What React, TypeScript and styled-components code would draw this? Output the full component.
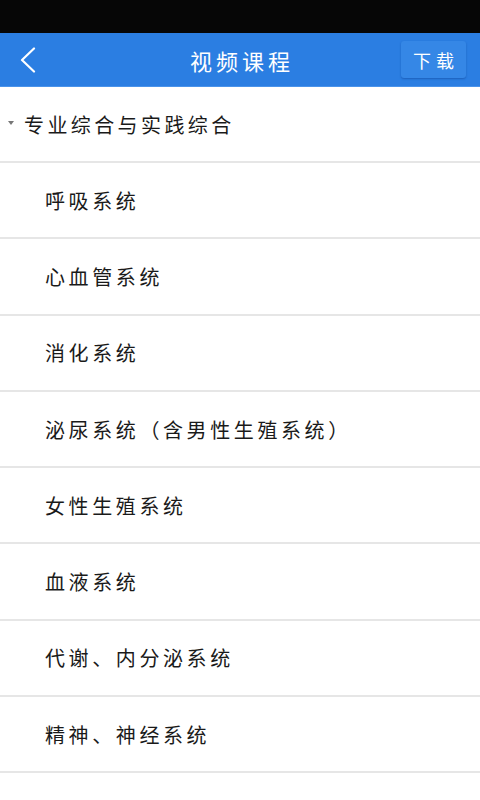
import React from "react";
import styled, { createGlobalStyle } from "styled-components";

const Global = createGlobalStyle`
  html, body { margin: 0; padding: 0; background: #ffffff; }
  body { font-family: "Noto Sans CJK SC", "Noto Sans", sans-serif; }
  * { box-sizing: border-box; }
`;

const Screen = styled.div`
  width: 480px;
  height: 800px;
  overflow: hidden;
  display: flex;
  flex-direction: column;
  background: #ffffff;
`;

const StatusBar = styled.div`
  height: 33px;
  background: #060606;
  flex-shrink: 0;
`;

const NavBar = styled.div`
  height: 54px;
  flex-shrink: 0;
  background: #2b7ee2;
  display: grid;
  grid-template-columns: 80px 1fr 80px;
  align-items: center;
  border-bottom: 1px solid #4a93ea;
`;

const BackButton = styled.div`
  display: flex;
  align-items: center;
  padding-left: 19px;
  height: 100%;
`;

const Title = styled.div`
  text-align: center;
  color: #ffffff;
  font-size: 22px;
  letter-spacing: 4px;
  padding-left: 4px;
  line-height: 1;
`;

const DownloadButton = styled.div`
  justify-self: end;
  margin-right: 14px;
  width: 65px;
  height: 37px;
  border-radius: 3px;
  background: #3587e6;
  box-shadow: 0 1px 2px rgba(10, 60, 140, 0.45);
  color: #ffffff;
  font-size: 18px;
  letter-spacing: 5px;
  padding-left: 5px;
  display: flex;
  align-items: center;
  justify-content: center;
`;

const List = styled.div`
  display: flex;
  flex-direction: column;
`;

const GroupHeader = styled.div`
  height: 76px;
  display: flex;
  align-items: center;
  padding-left: 8px;
  border-bottom: 2px solid #e6e6e6;
  color: #1a1a1a;
  font-size: 20px;
  letter-spacing: 3.4px;
`;

const Caret = styled.span`
  width: 0;
  height: 0;
  border-left: 3.5px solid transparent;
  border-right: 3.5px solid transparent;
  border-top: 4px solid #777777;
  margin-right: 10px;
  margin-top: -2px;
`;

const Row = styled.div`
  height: 76.3px;
  display: flex;
  align-items: center;
  padding-left: 45px;
  border-bottom: 2px solid #e6e6e6;
  color: #1a1a1a;
  font-size: 20px;
  letter-spacing: 3.6px;
`;

const items = [
  "呼吸系统",
  "心血管系统",
  "消化系统",
  "泌尿系统（含男性生殖系统）",
  "女性生殖系统",
  "血液系统",
  "代谢、内分泌系统",
  "精神、神经系统",
];

export default function App() {
  return (
    <>
      <Global />
      <Screen>
        <StatusBar />
        <NavBar>
          <BackButton>
            <svg width="17" height="26" viewBox="0 0 17 26" fill="none">
              <path d="M15 1.5 L3 13 L15 24.5" stroke="#ffffff" strokeWidth="2.2" strokeLinecap="round" strokeLinejoin="round" />
            </svg>
          </BackButton>
          <Title>视频课程</Title>
          <DownloadButton>下载</DownloadButton>
        </NavBar>
        <List>
          <GroupHeader>
            <Caret />
            专业综合与实践综合
          </GroupHeader>
          {items.map((t) => (
            <Row key={t}>{t}</Row>
          ))}
        </List>
      </Screen>
    </>
  );
}
